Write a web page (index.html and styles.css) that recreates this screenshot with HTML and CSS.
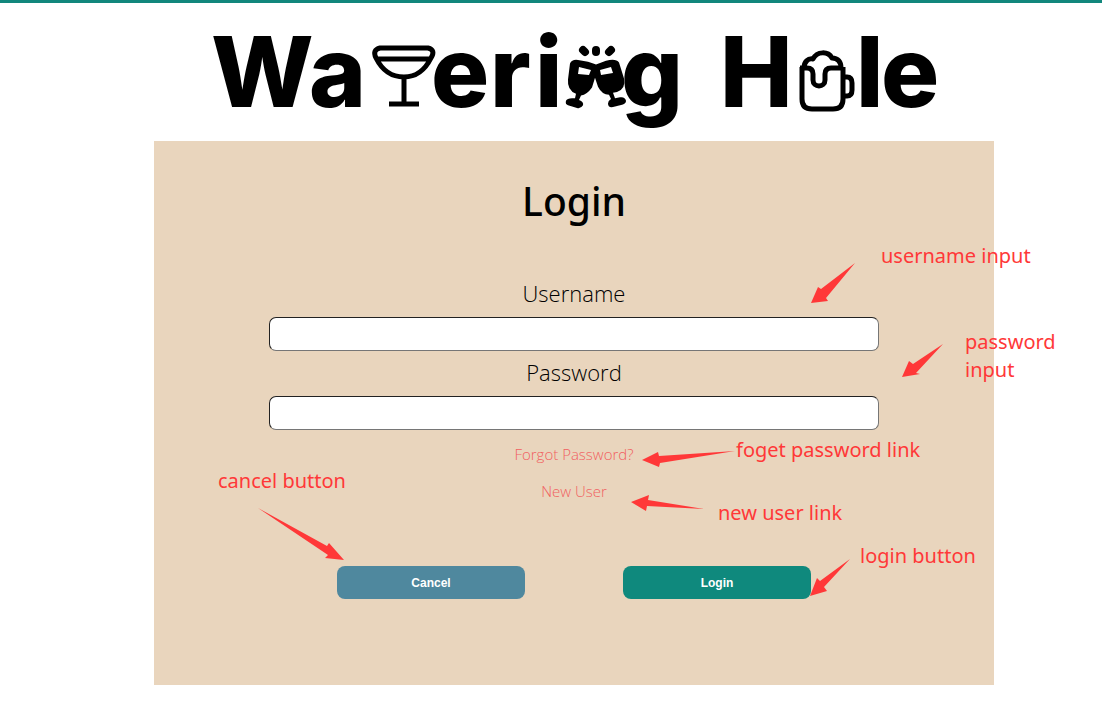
FILE: index.html
```html
<!DOCTYPE html>
<html lang="en">
<head>
<meta charset="utf-8">
<meta name="viewport" content="width=device-width, initial-scale=1">
<title>Watering Hole</title>
<link rel="stylesheet" href="styles.css">
</head>
<body class="page">
<div class="shell">
  <header class="brand">
    <svg class="logo" viewBox="-4 -15 740 134" role="img" aria-label="Watering Hole">
      <g class="logo-text">
        <text x="3 101" y="87">Wa</text>
        <text x="223 282 327" y="87">eri</text>
        <text x="413" y="87">g</text>
        <text x="512" y="87">H</text>
        <text x="648 673" y="87">le</text>
      </g>
      <g class="logo-line">
        <path d="M172 28H220Q228 30 223 38C216 52 206 57 196 57S175 52 168 38Q164 30 172 28ZM169 39H222M196 56V84"/>
        <path d="M181 84H211"/>
      </g>
      <g>
        <path d="M362 41Q364 36 370 37L380 39Q385 41 388 42L398 38Q408 35 411 40L416 58Q418 70 409 73L405 74 407 80 412 79Q417 78 418 83 418 86 415 87L405 90Q400 91 400 86 400 83 403 81L401 76Q394 76 390 67L387 57 384 68Q379 76 373 77L371 82Q376 84 375 88 373 92 369 91L360 88Q357 87 358 83 359 80 364 80L367 80 368 75Q359 71 360 59Z" transform="translate(0 7) scale(1 .89)"/>
        <path d="M371 47L383 50 381 55 370 54ZM392 50L403 47 405 53 393 55Z" fill="#fff"/>
        <path d="M375 30L377 32M388 30V32M403 30L401 32" stroke="#000" stroke-width="8" stroke-linecap="round"/>
      </g>
      <g class="logo-line" transform="translate(-7 0)">
        <path d="M601 47V79Q601 89 611 89H632Q642 89 642 79V47M642 57H646Q651 57 651 63V70Q651 76 646 76H642"/>
        <path d="M599 48H606Q612 48 612 54V60C612 68 624 68 624 60V54Q624 48 630 48H642M603 48C603 42 607 38 612 39C616 31 627 31 631 38C637 38 640 42 640 48"/>
      </g>
    </svg>
  </header>
  <main class="card">
    <form class="form">
      <h1 class="title">Login</h1>
      <div class="field">
        <label class="label" for="username">Username</label>
        <input class="input" id="username" name="username" type="text">
      </div>
      <div class="field">
        <label class="label" for="password">Password</label>
        <input class="input" id="password" name="password" type="password">
      </div>
      <nav class="links">
        <a class="link" href="#forgot">Forgot Password?</a>
        <a class="link" href="#new">New User</a>
      </nav>
      <div class="actions">
        <button class="button cancel" type="button">Cancel</button>
        <button class="button login" type="submit">Login</button>
      </div>
    </form>
    <div class="notes">
      <svg class="arrows" viewBox="0 0 840 544" aria-hidden="true">
        <path d="M701 122L672 157 674 160 657 162 664 146 667 148Z"/>
        <path d="M789 203L762 232 766 233 748 236 755 220 759 223Z"/>
        <path d="M581 310L506 322 505 326 488 319 504 311 505 315Z"/>
        <path d="M550 368L493 365 492 370 477 361 495 354 494 359Z"/>
        <path d="M104 367L173 405 175 402 190 419 171 417 174 414Z"/>
        <path d="M696 418L670 446 673 450 656 455 663 437 666 440Z"/>
      </svg>
      <span class="note note-username">username input</span>
      <span class="note note-password">password<br>input</span>
      <span class="note note-forgot">foget password link</span>
      <span class="note note-new">new user link</span>
      <span class="note note-cancel">cancel button</span>
      <span class="note note-login">login button</span>
    </div>
  </main>
</div>
</body>
</html>
```
FILE: styles.css
```css
* { box-sizing: border-box; }
.page {
  margin: 0;
  background: #fff;
  border-top: 3px solid #12877c;
  font-family: "Open Sans", "Noto Sans", sans-serif;
}
.shell {
  max-width: 886px;
  margin: 0 auto;
  padding: 2px 0 32px 46px;
}
.brand {
  display: flex;
  justify-content: center;
  padding-bottom: 2px;
}
.logo { width: 100%; max-width: 740px; }
.logo-text {
  font-family: Inter, sans-serif;
  font-size: 97px;
  font-weight: 800;
}
.logo-line {
  fill: none;
  stroke: #000;
  stroke-width: 5;
  stroke-linejoin: round;
}
.card {
  position: relative;
  background: #e9d5bd;
  padding: 32px 0 86px;
}
.form {
  display: flex;
  flex-direction: column;
  max-width: 610px;
  margin: 0 auto;
}
.title {
  margin: 0 0 48px;
  font-family: "Noto Sans", sans-serif;
  font-size: 39px;
  line-height: 56px;
  font-weight: 500;
  text-align: center;
}
.field {
  display: flex;
  flex-direction: column;
  gap: 7px;
  margin-bottom: 5px;
}
.label {
  font-size: 22px;
  line-height: 33px;
  font-weight: 300;
  text-align: center;
}
.input {
  width: 100%;
  height: 34px;
  padding: 0 8px;
  border: 1px solid #767676;
  border-top-color: #222;
  border-left-color: #222;
  border-radius: 7px;
  background: #fff;
  font-size: 16px;
}
.links {
  display: flex;
  flex-direction: column;
  align-items: center;
  gap: 15px;
  margin-top: 8px;
}
.link {
  color: #f16060;
  font-size: 15px;
  line-height: 22px;
  font-weight: 300;
  text-decoration: none;
}
.actions {
  display: flex;
  justify-content: center;
  gap: 98px;
  margin-top: 64px;
}
.button {
  width: 188px;
  height: 33px;
  border: 0;
  border-radius: 8px;
  color: #fff;
  font-family: "Liberation Sans", sans-serif;
  font-size: 12px;
  font-weight: 700;
}
.cancel { background: #4f889e; }
.login { background: #0f897d; }
.notes {
  position: absolute;
  inset: 0;
  pointer-events: none;
}
.arrows {
  width: 100%;
  height: 100%;
  fill: #ff3838;
}
.note {
  position: absolute;
  color: #ff3838;
  font-family: "Noto Sans", sans-serif;
  font-size: 20px;
  line-height: 28px;
  white-space: nowrap;
}
.note-username { left: 727px; top: 101px; }
.note-password { left: 811px; top: 187px; }
.note-forgot { left: 582px; top: 295px; }
.note-new { left: 564px; top: 358px; }
.note-cancel { left: 64px; top: 326px; }
.note-login { left: 706px; top: 401px; }
```
